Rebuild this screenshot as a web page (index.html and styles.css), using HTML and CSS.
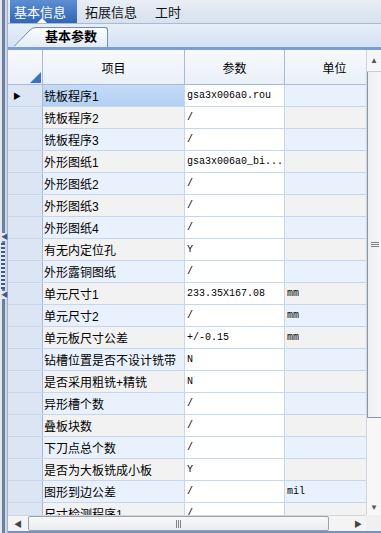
FILE: index.html
```html
<!DOCTYPE html>
<html>
<head>
<meta charset="utf-8">
<link rel="stylesheet" href="styles.css">
</head>
<body>
<div class="app">
  <div class="splitter">
    <span class="sp-arrow sp-a1">&#9664;</span>
    <span class="sp-dots"></span>
    <span class="sp-arrow">&#9664;</span>
  </div>
  <div class="main">
    <div class="tabbar">
      <div class="tab active">基本信息<span class="caret"></span></div>
      <div class="tab second">拓展信息</div>
      <div class="tab third">工时</div>
    </div>
    <div class="subbar">
      <div class="subtab">
        <svg class="slant" width="22" height="20" viewBox="0 0 22 20"><defs><linearGradient id="g" x1="0" y1="0" x2="0" y2="1"><stop offset="0" stop-color="#fbfdff"/><stop offset="1" stop-color="#e3ecf8"/></linearGradient></defs><path d="M0 20 L16 3 Q18.5 0.5 22 0.5 L22 20 Z" fill="url(#g)"/><path d="M0 19.5 L16 3 Q18.5 0.5 22 0.5" fill="none" stroke="#6f8db8" stroke-width="1"/></svg>
        <div class="subtab-body">基本参数</div>
      </div>
    </div>
    <div class="blueline"></div>
    <div class="gridarea">
      <div class="viewport">
        <div class="row header">
          <div class="c rh corner"><span class="tri"></span></div>
          <div class="c item">项目</div>
          <div class="c param">参数</div>
          <div class="c unit">单位</div>
        </div>
        <div class="row b sel"><div class="c rh"><span class="ptr">&#9654;</span></div><div class="c item">铣板程序1</div><div class="c param">gsa3x006a0.rou</div><div class="c unit"></div></div>
        <div class="row g"><div class="c rh"></div><div class="c item">铣板程序2</div><div class="c param">/</div><div class="c unit"></div></div>
        <div class="row b"><div class="c rh"></div><div class="c item">铣板程序3</div><div class="c param">/</div><div class="c unit"></div></div>
        <div class="row g"><div class="c rh"></div><div class="c item">外形图纸1</div><div class="c param">gsa3x006a0_bi...</div><div class="c unit"></div></div>
        <div class="row b"><div class="c rh"></div><div class="c item">外形图纸2</div><div class="c param">/</div><div class="c unit"></div></div>
        <div class="row g"><div class="c rh"></div><div class="c item">外形图纸3</div><div class="c param">/</div><div class="c unit"></div></div>
        <div class="row b"><div class="c rh"></div><div class="c item">外形图纸4</div><div class="c param">/</div><div class="c unit"></div></div>
        <div class="row g"><div class="c rh"></div><div class="c item">有无内定位孔</div><div class="c param">Y</div><div class="c unit"></div></div>
        <div class="row b"><div class="c rh"></div><div class="c item">外形露铜图纸</div><div class="c param">/</div><div class="c unit"></div></div>
        <div class="row g"><div class="c rh"></div><div class="c item">单元尺寸1</div><div class="c param">233.35X167.08</div><div class="c unit">mm</div></div>
        <div class="row b"><div class="c rh"></div><div class="c item">单元尺寸2</div><div class="c param">/</div><div class="c unit">mm</div></div>
        <div class="row g"><div class="c rh"></div><div class="c item">单元板尺寸公差</div><div class="c param">+/-0.15</div><div class="c unit">mm</div></div>
        <div class="row b"><div class="c rh"></div><div class="c item">钻槽位置是否不设计铣带</div><div class="c param">N</div><div class="c unit"></div></div>
        <div class="row g"><div class="c rh"></div><div class="c item">是否采用粗铣+精铣</div><div class="c param">N</div><div class="c unit"></div></div>
        <div class="row b"><div class="c rh"></div><div class="c item">异形槽个数</div><div class="c param">/</div><div class="c unit"></div></div>
        <div class="row g"><div class="c rh"></div><div class="c item">叠板块数</div><div class="c param">/</div><div class="c unit"></div></div>
        <div class="row b"><div class="c rh"></div><div class="c item">下刀点总个数</div><div class="c param">/</div><div class="c unit"></div></div>
        <div class="row g"><div class="c rh"></div><div class="c item">是否为大板铣成小板</div><div class="c param">Y</div><div class="c unit"></div></div>
        <div class="row b"><div class="c rh"></div><div class="c item">图形到边公差</div><div class="c param">/</div><div class="c unit">mil</div></div>
        <div class="row g"><div class="c rh"></div><div class="c item">尺寸检测程序1</div><div class="c param">/</div><div class="c unit"></div></div>
      </div>
      <div class="vscroll">
        <div class="vbtn up">&#9650;</div>
        <div class="vthumb"><span class="hgrip"></span></div>
        <div class="vtrack"></div>
        <div class="vbtn down">&#9660;</div>
      </div>
    </div>
    <div class="bottom">
      <div class="hscroll">
        <div class="hbtn left">&#9664;</div>
        <div class="hthumb"><span class="vgrip"></span></div>
        <div class="htrack"></div>
        <div class="hbtn right">&#9654;</div>
      </div>
      <div class="sbcorner"></div>
    </div>
    <div class="bottomline"></div>
  </div>
</div>
</body>
</html>
```

FILE: styles.css
```css
html, body {
  margin: 0;
  padding: 0;
}
body {
  width: 381px;
  height: 533px;
  overflow: hidden;
  font-family: "Liberation Sans", "Noto Sans CJK SC", sans-serif;
  font-size: 12px;
  color: #000;
  background: #fff;
}
.app {
  display: flex;
  width: 381px;
  height: 533px;
}
.splitter {
  width: 8px;
  flex: none;
  box-sizing: border-box;
  background: linear-gradient(to right, #e4e8ee 0, #e4e8ee 2px, #6c7f9f 2px, #6c7f9f 5px, #c9d6ea 5px, #c9d6ea 7px, #9fb1cc 7px);
  display: flex;
  flex-direction: column;
  align-items: flex-start;
  padding-top: 233px;
}
.sp-arrow {
  font-size: 7px;
  line-height: 8px;
  color: #3c5a8c;
  background: #e4e8ee;
  width: 6px;
  padding-left: 1px;
}
.sp-dots {
  display: block;
  width: 4px;
  height: 46px;
  margin: 2px 0 2px 1px;
  background: repeating-linear-gradient(to bottom, #3d5b90 0, #3d5b90 2px, #e4e8ee 2px, #e4e8ee 4px);
}
.main {
  flex: 1;
  display: flex;
  flex-direction: column;
  min-width: 0;
}
.tabbar {
  height: 24px;
  flex: none;
  display: flex;
  align-items: stretch;
  background: linear-gradient(to bottom, #e9eef6, #d7e1ee);
  border-bottom: 1px solid #a9bad2;
  box-sizing: border-box;
  font-size: 13px;
}
.tab {
  display: flex;
  align-items: center;
  color: #111;
}
.tab.active {
  position: relative;
  background: linear-gradient(to bottom, #5d8fd4, #3265b3);
  color: #fff;
  margin-left: 2px;
  padding: 0 11px 0 4px;
}
.tab.second {
  padding: 0 0 0 8px;
}
.tab.third {
  padding: 0 0 0 18px;
}
.caret {
  position: absolute;
  left: 27px;
  bottom: 0;
  width: 0;
  height: 0;
  border-left: 5px solid transparent;
  border-right: 5px solid transparent;
  border-bottom: 5px solid #fff;
}
.subbar {
  height: 23px;
  flex: none;
  background: linear-gradient(to bottom, #e6eef9, #d5e2f4);
  display: flex;
  align-items: flex-end;
  padding-left: 6px;
}
.subtab {
  display: flex;
  align-items: flex-end;
  height: 20px;
}
.slant {
  display: block;
  flex: none;
}
.subtab-body {
  height: 20px;
  box-sizing: border-box;
  width: 72px;
  background: linear-gradient(to bottom, #fbfdff, #e3ecf8);
  border-top: 1px solid #6f8db8;
  border-right: 1px solid #6f8db8;
  border-top-right-radius: 3px;
  font-size: 13px;
  font-weight: bold;
  padding-left: 9px;
  line-height: 18px;
  color: #000;
}
.blueline {
  height: 3px;
  flex: none;
  background: #7b9dcf;
}
.gridarea {
  display: flex;
  height: 465px;
  flex: none;
}
.viewport {
  width: 358px;
  flex: none;
  overflow: hidden;
  background: #fff;
}
.row {
  display: flex;
  height: 22px;
  box-sizing: border-box;
  border-bottom: 1px solid #c6d6ec;
  width: 377px;
}
.c {
  flex: none;
  box-sizing: border-box;
  border-right: 1px solid #c6d6ec;
  display: flex;
  align-items: center;
  white-space: nowrap;
  overflow: hidden;
}
.rh {
  width: 35px;
  background: #dbe5f3;
  border-right: 1px solid #a7bad6;
  padding-left: 5px;
}
.item {
  width: 142px;
  padding-left: 1px;
}
.param {
  width: 100px;
  padding-left: 2px;
  background: #fff;
  font-family: "Liberation Mono", monospace;
  font-size: 10px;
}
.unit {
  width: 100px;
  padding-left: 2px;
  font-family: "Liberation Mono", monospace;
  font-size: 10px;
  color: #000;
}
.row.g .item, .row.g .unit {
  background: #f2f2f2;
}
.row.b .item, .row.b .unit {
  background: #e9f1fc;
}
.row.sel .item {
  background: linear-gradient(to bottom, #c4dbf7, #b3d0f3);
}
.ptr {
  font-size: 8px;
  color: #000;
}
.row.header {
  height: 35px;
  border-bottom: 1px solid #a7bad6;
  background: linear-gradient(to bottom, #f7f9fd, #eaf0f8);
}
.row.header .c {
  justify-content: center;
  border-right-color: #a7bad6;
  background: transparent;
  font-family: "Liberation Sans", "Noto Sans CJK SC", sans-serif;
  font-size: 12px;
  padding: 0;
}
.row.header .rh {
  justify-content: flex-end;
  align-items: flex-end;
  padding: 0 1px 1px 0;
  background: transparent;
}
.tri {
  width: 0;
  height: 0;
  border-left: 11px solid transparent;
  border-bottom: 11px solid #3f72c2;
}
.vscroll {
  width: 15px;
  flex: none;
  display: flex;
  flex-direction: column;
  background: #f3f4f6;
  border-left: 1px solid #d0d6de;
  box-sizing: border-box;
}
.vbtn {
  flex: none;
  display: flex;
  justify-content: center;
  font-size: 8px;
  color: #555;
}
.vbtn.up {
  height: 21px;
  align-items: center;
  background: #f4f6f9;
  border-bottom: 1px solid #c9cfd8;
}
.vthumb {
  height: 346px;
  flex: none;
  box-sizing: border-box;
  background: linear-gradient(to right, #eceef2, #f6f7f9);
  border-left: 1px solid #8d96a3;
  border-bottom: 1px solid #8d96a3;
  display: flex;
  align-items: center;
  justify-content: center;
}
.hgrip {
  width: 8px;
  height: 5px;
  background: repeating-linear-gradient(to bottom, #7c838d 0, #7c838d 1px, transparent 1px, transparent 2px);
}
.vtrack {
  flex: 1;
  background: #f7f7f7;
}
.vbtn.down {
  height: 15px;
  align-items: center;
  background: #f7f7f7;
}
.bottom {
  display: flex;
  height: 16px;
  flex: none;
}
.hscroll {
  width: 358px;
  flex: none;
  display: flex;
  background: #f4f4f4;
  border-top: 1px solid #d2d7de;
  box-sizing: border-box;
}
.hbtn {
  flex: none;
  display: flex;
  align-items: center;
  justify-content: center;
  font-size: 8px;
  color: #444;
}
.hbtn.left {
  width: 20px;
}
.hthumb {
  width: 301px;
  flex: none;
  box-sizing: border-box;
  border: 1px solid #9aa2ad;
  border-radius: 2px;
  background: linear-gradient(to bottom, #f9f9fa, #e9ebee);
  display: flex;
  align-items: center;
  justify-content: center;
}
.vgrip {
  width: 5px;
  height: 8px;
  background: repeating-linear-gradient(to right, #7c838d 0, #7c838d 1px, transparent 1px, transparent 2px);
}
.htrack {
  flex: 1;
}
.hbtn.right {
  width: 16px;
}
.sbcorner {
  flex: 1;
  background: #f0f0f0;
}
.bottomline {
  height: 2px;
  flex: none;
  background: #7293c6;
}
```
